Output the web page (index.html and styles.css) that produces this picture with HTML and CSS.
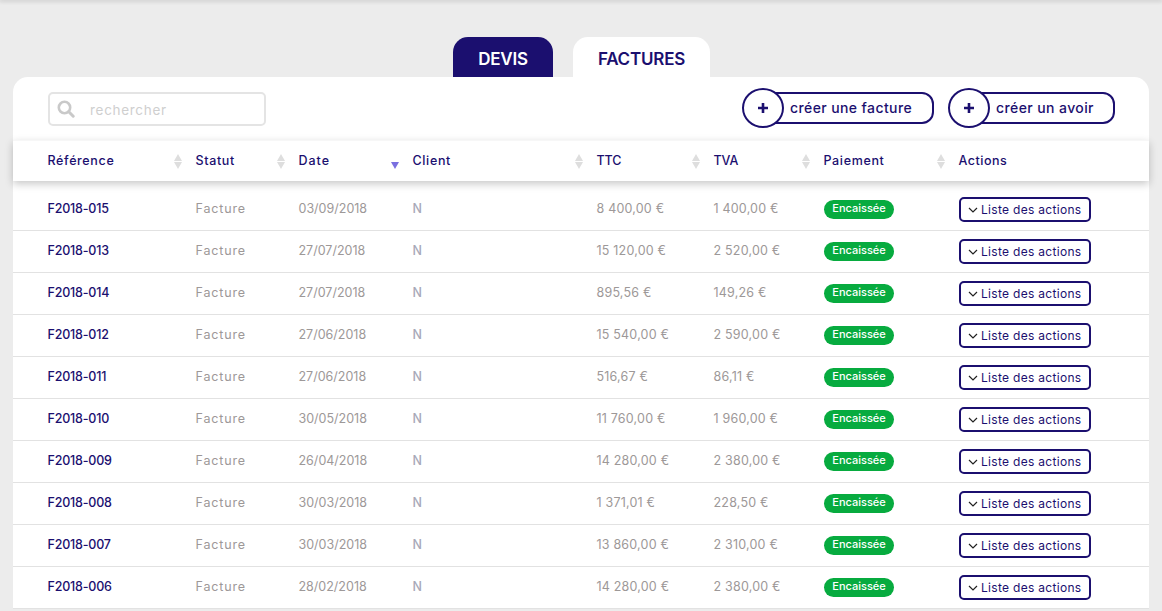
FILE: index.html
```html
<!DOCTYPE html>
<html lang="fr">
<head>
<meta charset="utf-8">
<title>Factures</title>
<link rel="stylesheet" href="styles.css">
</head>
<body>
<div class="topline"></div>
<main class="page">
  <nav class="tabs">
    <a class="tab tab-dark">DEVIS</a>
    <a class="tab tab-light">FACTURES</a>
  </nav>
  <section class="card">
    <div class="toolbar">
      <label class="search">
        <svg class="search-icon" viewBox="0 0 18 18" width="18" height="18"><circle cx="7.5" cy="7.5" r="5.7" fill="none" stroke="#c9c9c9" stroke-width="2.6"/><path d="M11.8 11.8L16.2 16.2" stroke="#c9c9c9" stroke-width="3" stroke-linecap="round"/></svg>
        <span class="placeholder">rechercher</span>
      </label>
      <div class="actions-top">
        <a class="create create-facture"><span class="plus"><svg viewBox="0 0 12 12" width="12" height="12"><path d="M6 1v10M1 6h10" stroke="#1b0f6f" stroke-width="2.6"/></svg></span><span class="create-label">créer une facture</span></a>
        <a class="create create-avoir"><span class="plus"><svg viewBox="0 0 12 12" width="12" height="12"><path d="M6 1v10M1 6h10" stroke="#1b0f6f" stroke-width="2.6"/></svg></span><span class="create-label">créer un avoir</span></a>
      </div>
    </div>
    <div class="grid head">
      <div class="th">Référence<i class="sort"></i></div>
      <div class="th">Statut<i class="sort"></i></div>
      <div class="th th-date">Date<i class="sort sort-desc"></i></div>
      <div class="th">Client<i class="sort"></i></div>
      <div class="th th-tight">TTC<i class="sort"></i></div>
      <div class="th th-tight">TVA<i class="sort"></i></div>
      <div class="th">Paiement<i class="sort"></i></div>
      <div class="th th-actions">Actions</div>
    </div>
    <div class="grid row first"><div class="ref">F2018-015</div><div class="kind">Facture</div><div>03/09/2018</div><div class="client">N</div><div class="amount">8 400,00 €</div><div class="amount">1 400,00 €</div><div><span class="badge">Encaissée</span></div><div class="action"><a class="list-btn"><svg viewBox="0 0 10 6" width="10" height="6"><path d="M1 1l4 4 4-4" fill="none" stroke="#222" stroke-width="1.2"/></svg>Liste des actions</a></div></div>
    <div class="grid row"><div class="ref">F2018-013</div><div class="kind">Facture</div><div>27/07/2018</div><div class="client">N</div><div class="amount">15 120,00 €</div><div class="amount">2 520,00 €</div><div><span class="badge">Encaissée</span></div><div class="action"><a class="list-btn"><svg viewBox="0 0 10 6" width="10" height="6"><path d="M1 1l4 4 4-4" fill="none" stroke="#222" stroke-width="1.2"/></svg>Liste des actions</a></div></div>
    <div class="grid row"><div class="ref">F2018-014</div><div class="kind">Facture</div><div>27/07/2018</div><div class="client">N</div><div class="amount">895,56 €</div><div class="amount">149,26 €</div><div><span class="badge">Encaissée</span></div><div class="action"><a class="list-btn"><svg viewBox="0 0 10 6" width="10" height="6"><path d="M1 1l4 4 4-4" fill="none" stroke="#222" stroke-width="1.2"/></svg>Liste des actions</a></div></div>
    <div class="grid row"><div class="ref">F2018-012</div><div class="kind">Facture</div><div>27/06/2018</div><div class="client">N</div><div class="amount">15 540,00 €</div><div class="amount">2 590,00 €</div><div><span class="badge">Encaissée</span></div><div class="action"><a class="list-btn"><svg viewBox="0 0 10 6" width="10" height="6"><path d="M1 1l4 4 4-4" fill="none" stroke="#222" stroke-width="1.2"/></svg>Liste des actions</a></div></div>
    <div class="grid row"><div class="ref">F2018-011</div><div class="kind">Facture</div><div>27/06/2018</div><div class="client">N</div><div class="amount">516,67 €</div><div class="amount">86,11 €</div><div><span class="badge">Encaissée</span></div><div class="action"><a class="list-btn"><svg viewBox="0 0 10 6" width="10" height="6"><path d="M1 1l4 4 4-4" fill="none" stroke="#222" stroke-width="1.2"/></svg>Liste des actions</a></div></div>
    <div class="grid row"><div class="ref">F2018-010</div><div class="kind">Facture</div><div>30/05/2018</div><div class="client">N</div><div class="amount">11 760,00 €</div><div class="amount">1 960,00 €</div><div><span class="badge">Encaissée</span></div><div class="action"><a class="list-btn"><svg viewBox="0 0 10 6" width="10" height="6"><path d="M1 1l4 4 4-4" fill="none" stroke="#222" stroke-width="1.2"/></svg>Liste des actions</a></div></div>
    <div class="grid row"><div class="ref">F2018-009</div><div class="kind">Facture</div><div>26/04/2018</div><div class="client">N</div><div class="amount">14 280,00 €</div><div class="amount">2 380,00 €</div><div><span class="badge">Encaissée</span></div><div class="action"><a class="list-btn"><svg viewBox="0 0 10 6" width="10" height="6"><path d="M1 1l4 4 4-4" fill="none" stroke="#222" stroke-width="1.2"/></svg>Liste des actions</a></div></div>
    <div class="grid row"><div class="ref">F2018-008</div><div class="kind">Facture</div><div>30/03/2018</div><div class="client">N</div><div class="amount">1 371,01 €</div><div class="amount">228,50 €</div><div><span class="badge">Encaissée</span></div><div class="action"><a class="list-btn"><svg viewBox="0 0 10 6" width="10" height="6"><path d="M1 1l4 4 4-4" fill="none" stroke="#222" stroke-width="1.2"/></svg>Liste des actions</a></div></div>
    <div class="grid row"><div class="ref">F2018-007</div><div class="kind">Facture</div><div>30/03/2018</div><div class="client">N</div><div class="amount">13 860,00 €</div><div class="amount">2 310,00 €</div><div><span class="badge">Encaissée</span></div><div class="action"><a class="list-btn"><svg viewBox="0 0 10 6" width="10" height="6"><path d="M1 1l4 4 4-4" fill="none" stroke="#222" stroke-width="1.2"/></svg>Liste des actions</a></div></div>
    <div class="grid row"><div class="ref">F2018-006</div><div class="kind">Facture</div><div>28/02/2018</div><div class="client">N</div><div class="amount">14 280,00 €</div><div class="amount">2 380,00 €</div><div><span class="badge">Encaissée</span></div><div class="action"><a class="list-btn"><svg viewBox="0 0 10 6" width="10" height="6"><path d="M1 1l4 4 4-4" fill="none" stroke="#222" stroke-width="1.2"/></svg>Liste des actions</a></div></div>
  </section>
</main>
</body>
</html>
```
FILE: styles.css
```css
* { box-sizing: border-box; }
html, body { margin: 0; height: 611px; overflow: hidden; }
body {
  background: #ececec;
  font-family: "Inter", "Liberation Sans", sans-serif;
  font-size: 12.5px;
  color: #9d9898;
}
.topline { height: 0; box-shadow: 0 0 4px 1px rgba(0,0,0,.22); }
.page { padding: 37px 13px 0; }
.tabs { display: flex; gap: 20px; padding-left: 440px; height: 40px; }
.tab {
  height: 40px;
  border-radius: 15px 15px 0 0;
  font-size: 17px;
  font-weight: 600;
  letter-spacing: -.2px;
  line-height: 45px;
  text-align: center;
}
.tab-dark { width: 100px; background: #1b0f6f; color: #fff; }
.tab-light { width: 137px; background: #fff; color: #1b0f6f; }
.card { background: #fff; border-radius: 15px 15px 0 0; }
.toolbar {
  height: 63px;
  display: flex;
  justify-content: space-between;
  padding: 15px 34px 0 35px;
}
.search {
  width: 218px;
  height: 34px;
  border: 2px solid #e4e4e4;
  border-radius: 5px;
  display: flex;
  align-items: center;
  padding-left: 7px;
}
.search-icon { flex: none; }
.placeholder { margin: 2px 0 0 15px; color: #cfcfcf; font-size: 13.5px; letter-spacing: .7px; }
.actions-top { display: flex; gap: 27px; height: 32px; }
.create {
  position: relative;
  height: 32px;
  border: 2px solid #1b0f6f;
  border-radius: 12px;
  display: flex;
  align-items: center;
  color: #1b0f6f;
  font-size: 14px;
  font-weight: 500;
}
.create-facture { width: 179px; }
.create-avoir { width: 154px; }
.create-label { margin: 0 0 1px 33px; white-space: nowrap; letter-spacing: .4px; }
.plus {
  position: absolute;
  left: -15px;
  top: -6px;
  width: 42px;
  height: 40px;
  border: 2px solid #1b0f6f;
  border-radius: 50%;
  background: #fff;
  display: flex;
  align-items: center;
  justify-content: center;
}
.grid {
  display: grid;
  grid-template-columns: 148px 103px 114px 184px 117px 110px 135px 1fr;
  padding-left: 35px;
  align-items: center;
}
.head {
  position: relative;
  height: 41px;
  padding-bottom: 2px;
  color: #1b0f6f;
  font-weight: 500;
  box-shadow: 0 3px 8px rgba(0,0,0,.22);
  border-top: 1px solid #f7f7f7;
}
.th { position: relative; letter-spacing: .65px; margin-left: -.5px; }
.th-date { letter-spacing: 1px; }
.th-tight { letter-spacing: -.1px; }
.th-actions { letter-spacing: .5px; }
.sort {
  position: absolute;
  top: 1px;
  right: 13px;
  width: 9px;
  height: 15px;
}
.sort::before, .sort::after {
  content: "";
  position: absolute;
  left: 0;
  border-left: 4.5px solid transparent;
  border-right: 4.5px solid transparent;
}
.sort::before { top: 0; border-bottom: 7px solid #dedede; }
.sort::after { bottom: 0; border-top: 7px solid #dedede; }
.sort-desc { right: 13px; top: 1px; }
.sort-desc::before { display: none; }
.sort-desc::after { border-top-color: #7a6fe0; bottom: 0; }
.row {
  height: 42px;
  border-bottom: 1px solid #e2e2e2;
}
.row.first { height: 50px; padding-top: 8px; }
.row > div:not(.action) { margin-left: -.5px; padding-bottom: 2px; }
.row > div:nth-child(7) { margin-left: 0; padding-bottom: 0; }
.ref { color: #1b0f6f; font-weight: 500; letter-spacing: -.2px; }
.kind { letter-spacing: .85px; }
.amount { letter-spacing: .2px; }
.client { color: #a8a8b8; font-weight: 500; }
.badge {
  display: block;
  width: 70px;
  height: 19px;
  line-height: 17px;
  border-radius: 10px;
  background: #07ab3f;
  color: #fff;
  font-size: 11px;
  font-weight: 500;
  text-align: center;
}
.list-btn {
  display: flex;
  width: 132px;
  height: 25px;
  align-items: center;
  gap: 3px;
  padding-left: 7px;
  border: 2px solid #1b0f6f;
  border-radius: 5px;
  color: #1b0f6f;
  font-size: 12px;
  letter-spacing: .3px;
  white-space: nowrap;
}
```
